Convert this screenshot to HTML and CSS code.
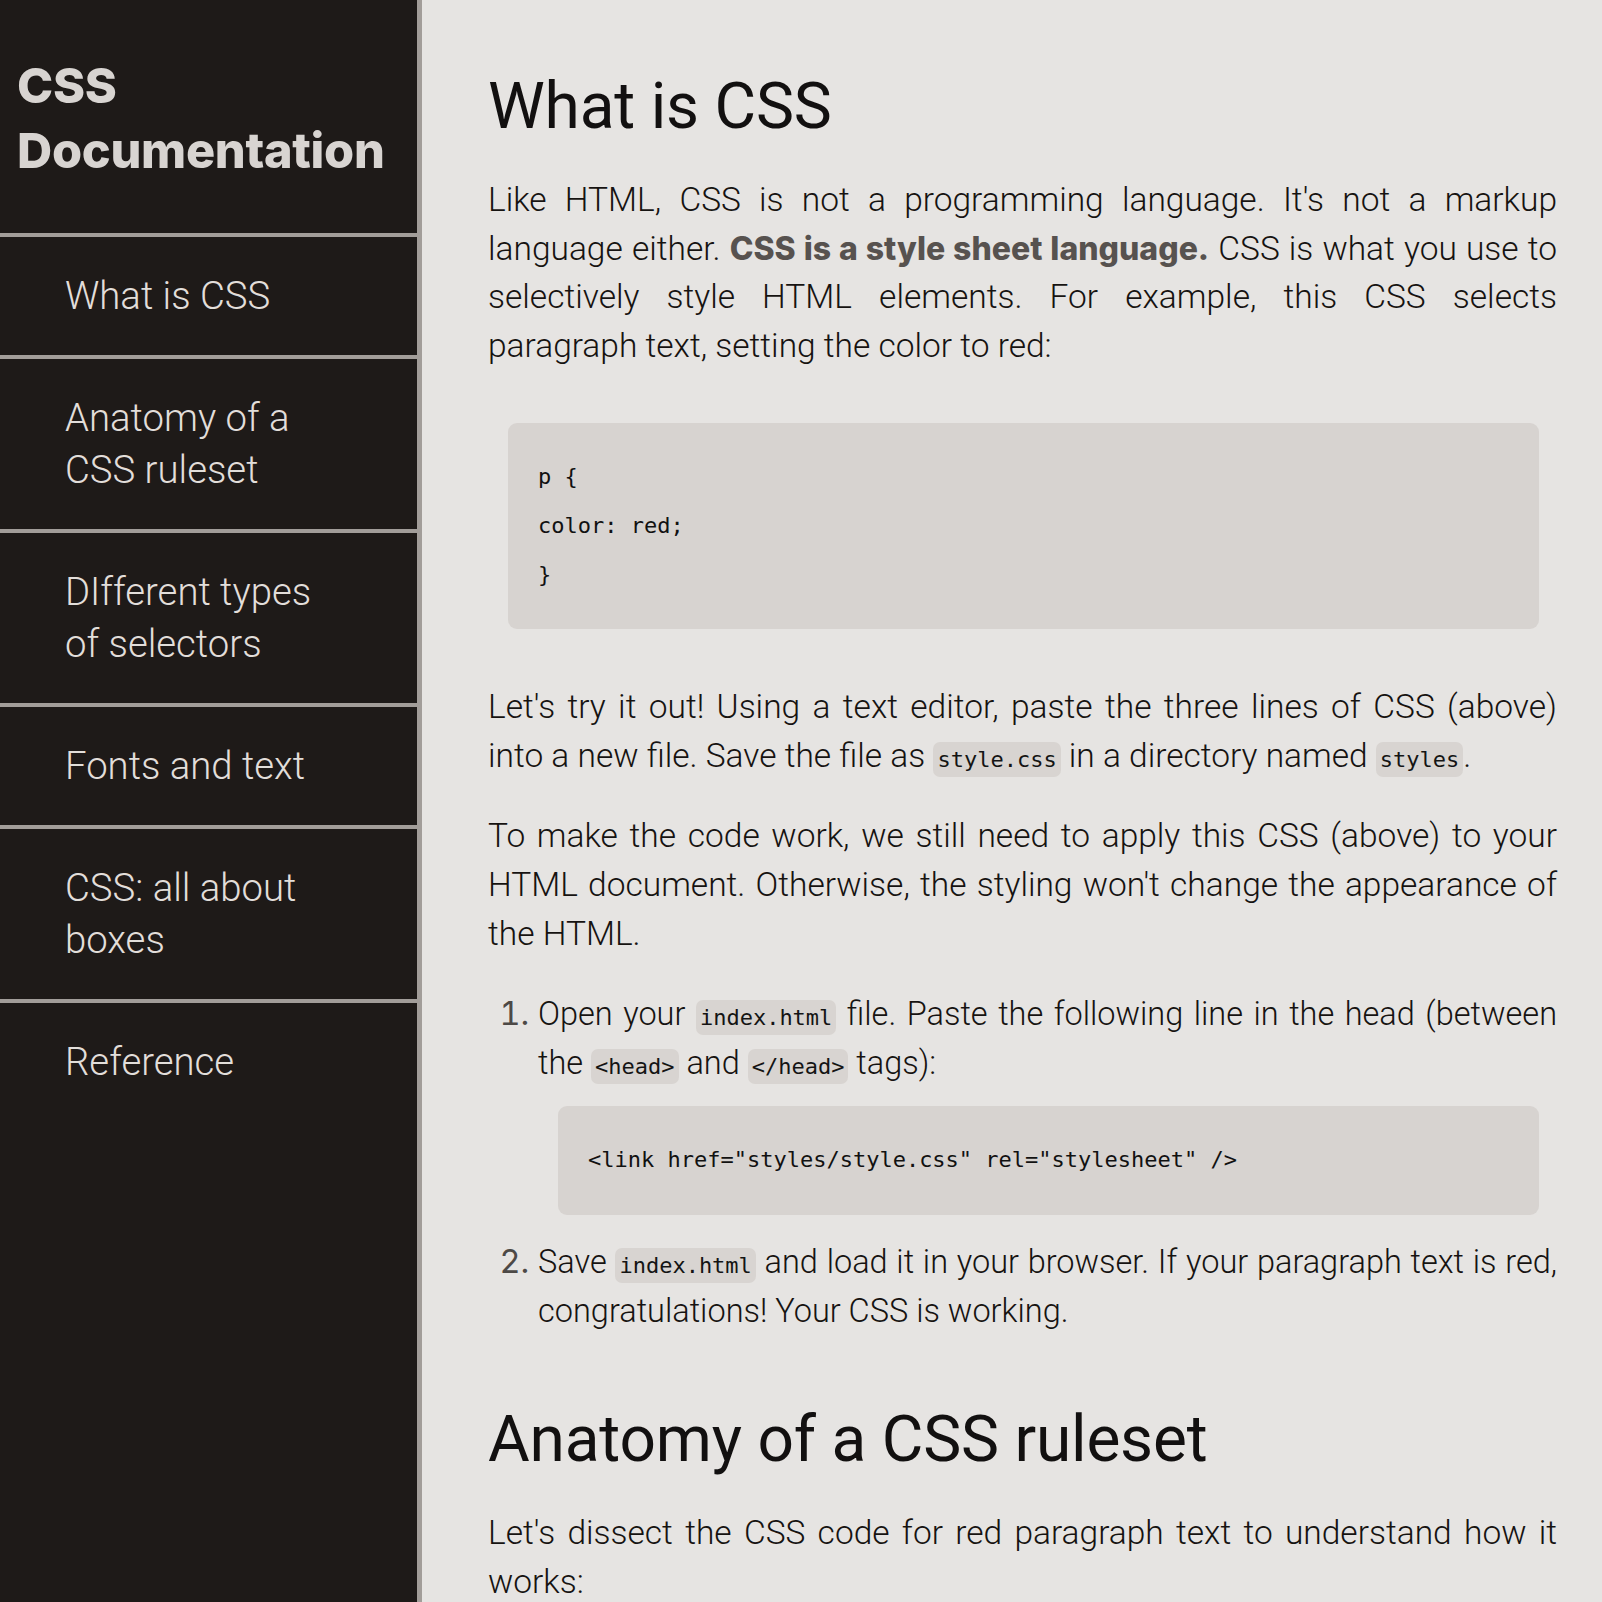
FILE: index.html
```html
<!DOCTYPE html>
<html lang="en">
<head>
<meta charset="utf-8">
<title>CSS Documentation</title>
<link rel="stylesheet" href="styles.css">
</head>
<body>
<div class="page">
  <nav class="sidebar" id="navbar">
    <header class="sidebar-header">
      <h1 class="site-title">CSS Documentation</h1>
    </header>
    <ul class="nav-list">
      <li class="nav-item"><a class="nav-link" href="#What_is_CSS">What is CSS</a></li>
      <li class="nav-item"><a class="nav-link" href="#Anatomy_of_a_CSS_ruleset">Anatomy of a CSS ruleset</a></li>
      <li class="nav-item"><a class="nav-link" href="#Different_types_of_selectors">DIfferent types of selectors</a></li>
      <li class="nav-item"><a class="nav-link" href="#Fonts_and_text">Fonts and text</a></li>
      <li class="nav-item"><a class="nav-link" href="#CSS_all_about_boxes">CSS: all about boxes</a></li>
      <li class="nav-item"><a class="nav-link" href="#Reference">Reference</a></li>
    </ul>
  </nav>
  <main class="main-doc" id="main-doc">
    <section class="main-section" id="What_is_CSS">
      <h2 class="section-title">What is CSS</h2>
      <p class="text">Like HTML, CSS is not a programming language. It's not a markup language either. <strong class="strong">CSS is a style sheet language.</strong> CSS is what you use to selectively style HTML elements. For example, this CSS selects paragraph text, setting the color to red:</p>
      <pre class="code-block code-block--spaced"><code>p {
color: red;
}</code></pre>
      <p class="text">Let's try it out! Using a text editor, paste the three lines of CSS (above) into a new file. Save the file as <code class="inline-code">style.css</code> in a directory named <code class="inline-code">styles</code>.</p>
      <p class="text">To make the code work, we still need to apply this CSS (above) to your HTML document. Otherwise, the styling won't change the appearance of the HTML.</p>
      <ol class="steps">
        <li class="step">Open your <code class="inline-code">index.html</code> file. Paste the following line in the head (between the <code class="inline-code">&lt;head&gt;</code> and <code class="inline-code">&lt;/head&gt;</code> tags):
          <pre class="code-block code-block--nested"><code>&lt;link href="styles/style.css" rel="stylesheet" /&gt;</code></pre>
        </li>
        <li class="step">Save <code class="inline-code">index.html</code> and load it in your browser. If your paragraph text is red, congratulations! Your CSS is working.</li>
      </ol>
    </section>
    <section class="main-section" id="Anatomy_of_a_CSS_ruleset">
      <h2 class="section-title section-title--next">Anatomy of a CSS ruleset</h2>
      <p class="text">Let's dissect the CSS code for red paragraph text to understand how it works:</p>
    </section>
  </main>
</div>
</body>
</html>
```

FILE: styles.css
```css
* {
  box-sizing: border-box;
}

html, body {
  margin: 0;
  padding: 0;
}

body {
  background: #e6e4e2;
  color: #161311;
  font-family: Roboto, "Liberation Sans", sans-serif;
}

.page {
  display: flex;
  min-height: 100vh;
  align-items: stretch;
}

/* Sidebar */
.sidebar {
  flex: 0 0 422px;
  width: 422px;
  background: #1e1a18;
  border-right: 5px solid #a29d99;
  min-height: 1602px;
}

.sidebar-header {
  padding: 53px 17px 50px;
  border-bottom: 4px solid #a29d99;
}

.site-title {
  margin: 0;
  font-family: Inter, "Noto Sans", sans-serif;
  font-weight: 800;
  font-size: 48.7px;
  line-height: 65px;
  letter-spacing: -0.3px;
  color: #d8d4d1;
}

.nav-list {
  list-style: none;
  margin: 0;
  padding: 0;
}

.nav-item {
  border-bottom: 4px solid #a29d99;
}

.nav-item:last-child {
  border-bottom: none;
}

.nav-link {
  display: block;
  padding: 33px 66px 33px 65px;
  font-family: Roboto, sans-serif;
  font-weight: 300;
  font-size: 38.3px;
  line-height: 52px;
  color: #e2deda;
  text-decoration: none;
}

/* Main */
.main-doc {
  flex: 1 1 auto;
  padding: 69px 45px 40px 66px;
}

.section-title {
  margin: 0 0 32px;
  font-family: Roboto, sans-serif;
  font-weight: 400;
  font-size: 64px;
  line-height: 75px;
  color: #121010;
  letter-spacing: -0.2px;
}

.section-title--next {
  margin-top: 67px;
}

.text {
  margin: 0 0 32px;
  font-size: 33.5px;
  line-height: 48.6px;
  font-weight: 300;
  text-align: justify;
}

.strong {
  font-family: Inter, "Noto Sans", sans-serif;
  font-weight: 800;
  font-size: 32px;
  color: #57524f;
}

.code-block {
  margin: 21px 18px 21px 20px;
  padding: 30px;
  background: #d7d3d0;
  border-radius: 9px;
  font-family: "DejaVu Sans Mono", "Liberation Mono", monospace;
  font-size: 22px;
  line-height: 48.6px;
  color: #111;
  text-align: left;
  white-space: pre;
}

.code-block--spaced {
  margin-top: 53px;
  margin-bottom: 54px;
}

.code-block--nested {
  margin-top: 19px;
  margin-bottom: 23px;
}

.code-block code {
  font-family: inherit;
}

.inline-code {
  font-family: "DejaVu Sans Mono", "Liberation Mono", monospace;
  font-size: 22px;
  line-height: 1;
  background: #d8d4d1;
  border-radius: 7px;
  padding: 5px 4px;
  color: #141414;
}

.steps {
  margin: 32px 0 0;
  padding-left: 50px;
  font-size: 32.5px;
  line-height: 48.6px;
  font-weight: 300;
}

.step {
  text-align: justify;
}

.step::marker {
  font-family: Inter, sans-serif;
  color: #4d4946;
  font-weight: 400;
}
```
